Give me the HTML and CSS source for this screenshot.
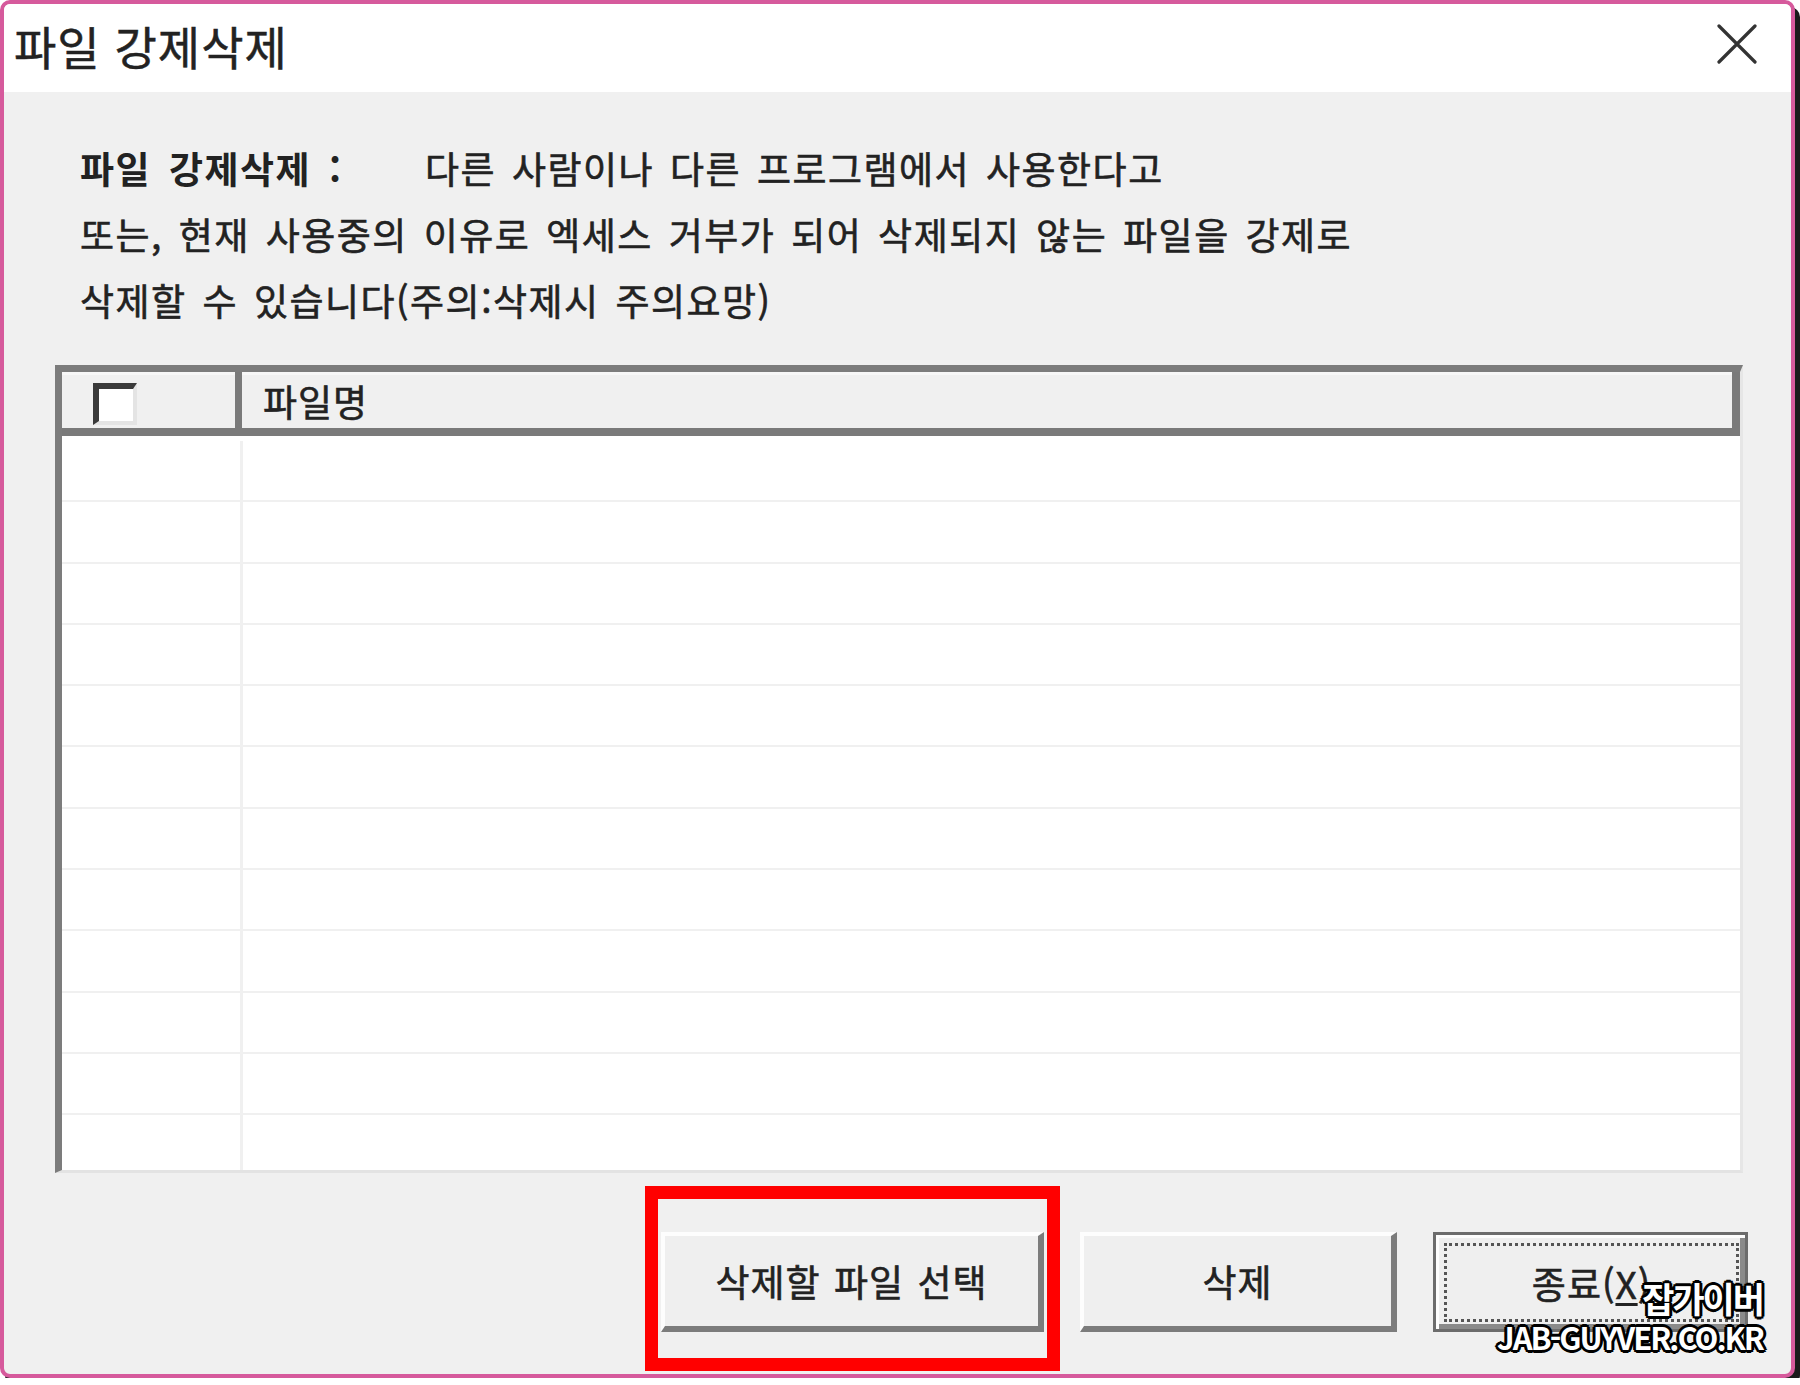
FILE: index.html
```html
<!DOCTYPE html>
<html lang="ko">
<head>
    <meta charset="UTF-8">
    <title>파일 강제삭제</title>
    <link rel="stylesheet" href="styles.css">
</head>
<body>
    <div class="window">
        <div class="titlebar">
            <span class="title">파일 강제삭제</span>
            <svg class="close" width="40" height="40" viewBox="0 0 40 40">
                <path d="M2 2 L38 38 M38 2 L2 38" stroke="#333" stroke-width="3.2" stroke-linecap="round" fill="none"/>
            </svg>
        </div>

        <div class="content">
            <div class="desc">
                <p><span class="label">파일 강제삭제 :</span>다른 사람이나 다른 프로그램에서 사용한다고</p>
                <p>또는, 현재 사용중의 이유로 엑세스 거부가 되어 삭제되지 않는 파일을 강제로</p>
                <p>삭제할 수 있습니다(주의:삭제시 주의요망)</p>
            </div>

            <div class="listview">
                <div class="list-header">
                    <div class="col-check"><span class="checkbox"></span></div>
                    <div class="col-name">파일명</div>
                </div>
                <div class="list-body" id="rows"></div>
            </div>

            <div class="buttons">
                <div class="highlight">
                    <button class="btn btn-select">삭제할 파일 선택</button>
                </div>
                <button class="btn btn-delete">삭제</button>
                <button class="btn btn-close"><span class="focus">종료(<u>X</u>)</span></button>
            </div>
        </div>

        <div class="watermark">
            <div class="wm-name">잡가이버</div>
            <div class="wm-url">JAB-GUYVER.CO.KR</div>
        </div>
    </div>

    <script>
    // 빈 목록 행 채우기
    const rows = document.getElementById('rows');
    for (let i = 0; i < 12; i++) {
        const row = document.createElement('div');
        row.className = 'row';
        row.innerHTML = '<div class="cell-check"></div><div class="cell-name"></div>';
        rows.appendChild(row);
    }
    </script>
</body>
</html>
```

FILE: styles.css
```css
body {
    margin: 0;
    background-color: #ffffff;
    font-family: "Noto Sans CJK KR", "Noto Sans", sans-serif;
    color: #222;
}
.window {
    position: relative;
    box-sizing: border-box;
    width: 1795px;
    height: 1378px;
    border: 4px solid #d65a9c;
    border-radius: 10px;
    box-shadow: 5px 7px 0 #1a1a1a;
    background-color: #f0f0f0;
    display: flex;
    flex-direction: column;
    overflow: hidden;
}
.titlebar {
    height: 88px;
    background-color: #ffffff;
    display: flex;
    align-items: center;
    justify-content: space-between;
    padding: 0 34px 0 10px;
}
.title {
    font-size: 46px;
    letter-spacing: 1px;
    color: #222;
    padding-bottom: 6px;
    -webkit-text-stroke: 0.5px #222;
}
.close {
    margin-bottom: 8px;
}
.content {
    flex: 1;
    padding: 0 48px 0 51px;
}
.desc {
    padding: 43px 0 0 25px;
    font-size: 37px;
    line-height: 66px;
    letter-spacing: 1.5px;
    word-spacing: 4px;
    color: #222;
    -webkit-text-stroke: 0.6px #222;
}
.desc p {
    margin: 0;
    white-space: nowrap;
}
.label {
    display: inline-block;
    width: 345px;
    font-weight: bold;
    word-spacing: 6px;
    -webkit-text-stroke: 0;
}
.listview {
    margin-top: 32px;
    box-sizing: border-box;
    width: 1688px;
    height: 808px;
    background-color: #ffffff;
    border-style: solid;
    border-width: 7px 3px 3px 7px;
    border-color: #7c7c7c #e6e6e6 #e3e3e3 #7c7c7c;
    overflow: hidden;
}
.list-header {
    display: flex;
    height: 56px;
    background-color: #f0f0f0;
    border-bottom: 8px solid #7a7a7a;
    border-right: 8px solid #7a7a7a;
    box-shadow: inset 0 3px 0 #f7f7f7;
}
.col-check {
    box-sizing: border-box;
    width: 180px;
    border-right: 7px solid #7a7a7a;
    padding: 11px 0 0 31px;
}
.checkbox {
    display: block;
    box-sizing: border-box;
    width: 44px;
    height: 42px;
    background-color: #ffffff;
    border-style: solid;
    border-width: 6px 4px 4px 6px;
    border-color: #3a3a3a #e4e4e4 #e4e4e4 #3a3a3a;
}
.col-name {
    padding-left: 21px;
    font-size: 37px;
    line-height: 58px;
    letter-spacing: 1px;
    -webkit-text-stroke: 0.6px #222;
}
.list-body {
    padding-top: 5px;
}
.row {
    display: flex;
    height: 59.3px;
    border-bottom: 2px solid #f0f0f0;
}
.cell-check {
    width: 178px;
    border-right: 3px solid #f0f0f0;
}
.cell-name {
    flex: 1;
}
.buttons {
    margin: 59px -5px 0 0;
    display: flex;
    justify-content: flex-end;
    gap: 36px;
}
.btn {
    box-sizing: border-box;
    height: 100px;
    background-color: #efefef;
    font-family: "Noto Sans CJK KR", "Noto Sans", sans-serif;
    font-size: 37px;
    color: #222;
    letter-spacing: 1px;
    word-spacing: 2px;
    -webkit-text-stroke: 0.6px #222;
    border-style: solid;
    border-width: 4px 6px 6px 4px;
    border-color: #fdfdfd #7c7c7c #7c7c7c #fdfdfd;
    padding: 0;
}
.highlight {
    position: relative;
}
.highlight::after {
    content: "";
    position: absolute;
    top: -46px;
    left: -16px;
    right: -16px;
    bottom: -39px;
    border: 13px solid #ff0000;
}
.btn-select {
    display: block;
    width: 383px;
}
.btn-delete {
    width: 317px;
}
.btn-close {
    width: 315px;
    display: flex;
    padding: 8px 6px 7px 8px;
    border: 3px solid #6c6c6c;
    box-shadow: inset 3px 3px 0 #fdfdfd, inset -5px -5px 0 #8a8a8a;
}
.focus {
    flex: 1;
    display: flex;
    align-items: center;
    justify-content: center;
    border: 3px dotted #555;
    -webkit-text-stroke: 0.6px #222;
}
.focus u {
    text-underline-offset: 4px;
}
.watermark {
    position: absolute;
    right: 28px;
    bottom: 19px;
    text-align: right;
    color: #ffffff;
    font-weight: bold;
    text-shadow: 3px 0 0 #000, -3px 0 0 #000, 0 3px 0 #000, 0 -3px 0 #000,
        2px 2px 0 #000, -2px -2px 0 #000, 2px -2px 0 #000, -2px 2px 0 #000;
}
.wm-name {
    font-size: 35px;
    line-height: 42px;
    letter-spacing: -2px;
}
.wm-url {
    font-size: 31px;
    line-height: 36px;
    letter-spacing: -2px;
}
```
